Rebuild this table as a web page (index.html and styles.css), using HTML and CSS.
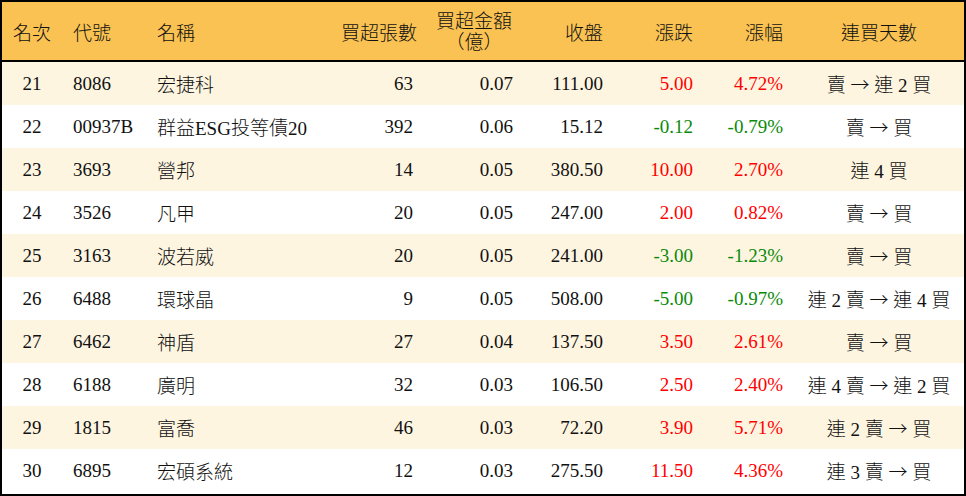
FILE: index.html
```html
<!DOCTYPE html>
<html lang="zh-Hant">
<head>
<meta charset="utf-8">
<title>買超排行</title>
<link rel="stylesheet" href="styles.css">
</head>
<body>
<div class="frame">
<table class="rank">
<colgroup>
<col class="c-rank"><col class="c-code"><col class="c-name"><col class="c-vol"><col class="c-amt"><col class="c-close"><col class="c-chg"><col class="c-pct"><col class="c-days">
</colgroup>
<thead>
<tr>
<th class="center">名次</th>
<th class="left">代號</th>
<th class="left">名稱</th>
<th class="right">買超張數</th>
<th class="center two">買超金額<br>（億）</th>
<th class="right">收盤</th>
<th class="right">漲跌</th>
<th class="right">漲幅</th>
<th class="center">連買天數</th>
</tr>
</thead>
<tbody>
<tr><td class="center">21</td><td>8086</td><td>宏捷科</td><td class="right">63</td><td class="right">0.07</td><td class="right">111.00</td><td class="right up">5.00</td><td class="right up">4.72%</td><td class="center">賣 <span class="arrow">→</span> 連 2 買</td></tr>
<tr><td class="center">22</td><td>00937B</td><td>群益ESG投等債20</td><td class="right">392</td><td class="right">0.06</td><td class="right">15.12</td><td class="right down">-0.12</td><td class="right down">-0.79%</td><td class="center">賣 <span class="arrow">→</span> 買</td></tr>
<tr><td class="center">23</td><td>3693</td><td>營邦</td><td class="right">14</td><td class="right">0.05</td><td class="right">380.50</td><td class="right up">10.00</td><td class="right up">2.70%</td><td class="center">連 4 買</td></tr>
<tr><td class="center">24</td><td>3526</td><td>凡甲</td><td class="right">20</td><td class="right">0.05</td><td class="right">247.00</td><td class="right up">2.00</td><td class="right up">0.82%</td><td class="center">賣 <span class="arrow">→</span> 買</td></tr>
<tr><td class="center">25</td><td>3163</td><td>波若威</td><td class="right">20</td><td class="right">0.05</td><td class="right">241.00</td><td class="right down">-3.00</td><td class="right down">-1.23%</td><td class="center">賣 <span class="arrow">→</span> 買</td></tr>
<tr><td class="center">26</td><td>6488</td><td>環球晶</td><td class="right">9</td><td class="right">0.05</td><td class="right">508.00</td><td class="right down">-5.00</td><td class="right down">-0.97%</td><td class="center">連 2 賣 <span class="arrow">→</span> 連 4 買</td></tr>
<tr><td class="center">27</td><td>6462</td><td>神盾</td><td class="right">27</td><td class="right">0.04</td><td class="right">137.50</td><td class="right up">3.50</td><td class="right up">2.61%</td><td class="center">賣 <span class="arrow">→</span> 買</td></tr>
<tr><td class="center">28</td><td>6188</td><td>廣明</td><td class="right">32</td><td class="right">0.03</td><td class="right">106.50</td><td class="right up">2.50</td><td class="right up">2.40%</td><td class="center">連 4 賣 <span class="arrow">→</span> 連 2 買</td></tr>
<tr><td class="center">29</td><td>1815</td><td>富喬</td><td class="right">46</td><td class="right">0.03</td><td class="right">72.20</td><td class="right up">3.90</td><td class="right up">5.71%</td><td class="center">連 2 賣 <span class="arrow">→</span> 買</td></tr>
<tr><td class="center">30</td><td>6895</td><td>宏碩系統</td><td class="right">12</td><td class="right">0.03</td><td class="right">275.50</td><td class="right up">11.50</td><td class="right up">4.36%</td><td class="center">連 3 賣 <span class="arrow">→</span> 買</td></tr>
</tbody>
</table>
</div>
</body>
</html>
```
FILE: styles.css
```css
* { box-sizing: border-box; }
html, body { margin: 0; padding: 0; background: #ffffff; }
body {
  font-family: "Liberation Serif", "Noto Sans CJK TC", serif;
  font-size: 19px;
  font-weight: 300;
  color: #111111;
}
.frame {
  width: 966px;
  height: 496px;
  border: 2px solid #000000;
  overflow: hidden;
}
.rank {
  width: 962px;
  table-layout: fixed;
  border-collapse: separate;
  border-spacing: 0;
}
.c-rank { width: 60px; }
.c-code { width: 84px; }
.c-name { width: 184px; }
.c-vol { width: 94px; }
.c-amt { width: 100px; }
.c-close { width: 90px; }
.c-chg { width: 90px; }
.c-pct { width: 90px; }
.c-days { width: 170px; }

.rank th {
  height: 60px;
  background: #f9c253;
  border-bottom: 2px solid #000000;
  font-weight: 300;
  font-size: 19px;
  padding: 0 11px;
  vertical-align: middle;
  white-space: nowrap;
}
.rank th.two {
  line-height: 21px;
  padding-top: 1px;
  text-spacing-trim: space-all;
}
.rank td {
  height: 43px;
  padding: 0 11px;
  vertical-align: middle;
  white-space: nowrap;
  text-align: left;
}
.rank tbody tr:nth-child(odd) td { background: #fef5e1; }
.rank tbody tr:nth-child(even) td { background: #ffffff; }

.arrow {
  font-family: "Noto Sans CJK TC", sans-serif;
  font-weight: 300;
}
.left { text-align: left; }
.rank .right { text-align: right; }
.rank .center { text-align: center; }
.up { color: #ff0000; }
.down { color: #0a8a0a; }
```
